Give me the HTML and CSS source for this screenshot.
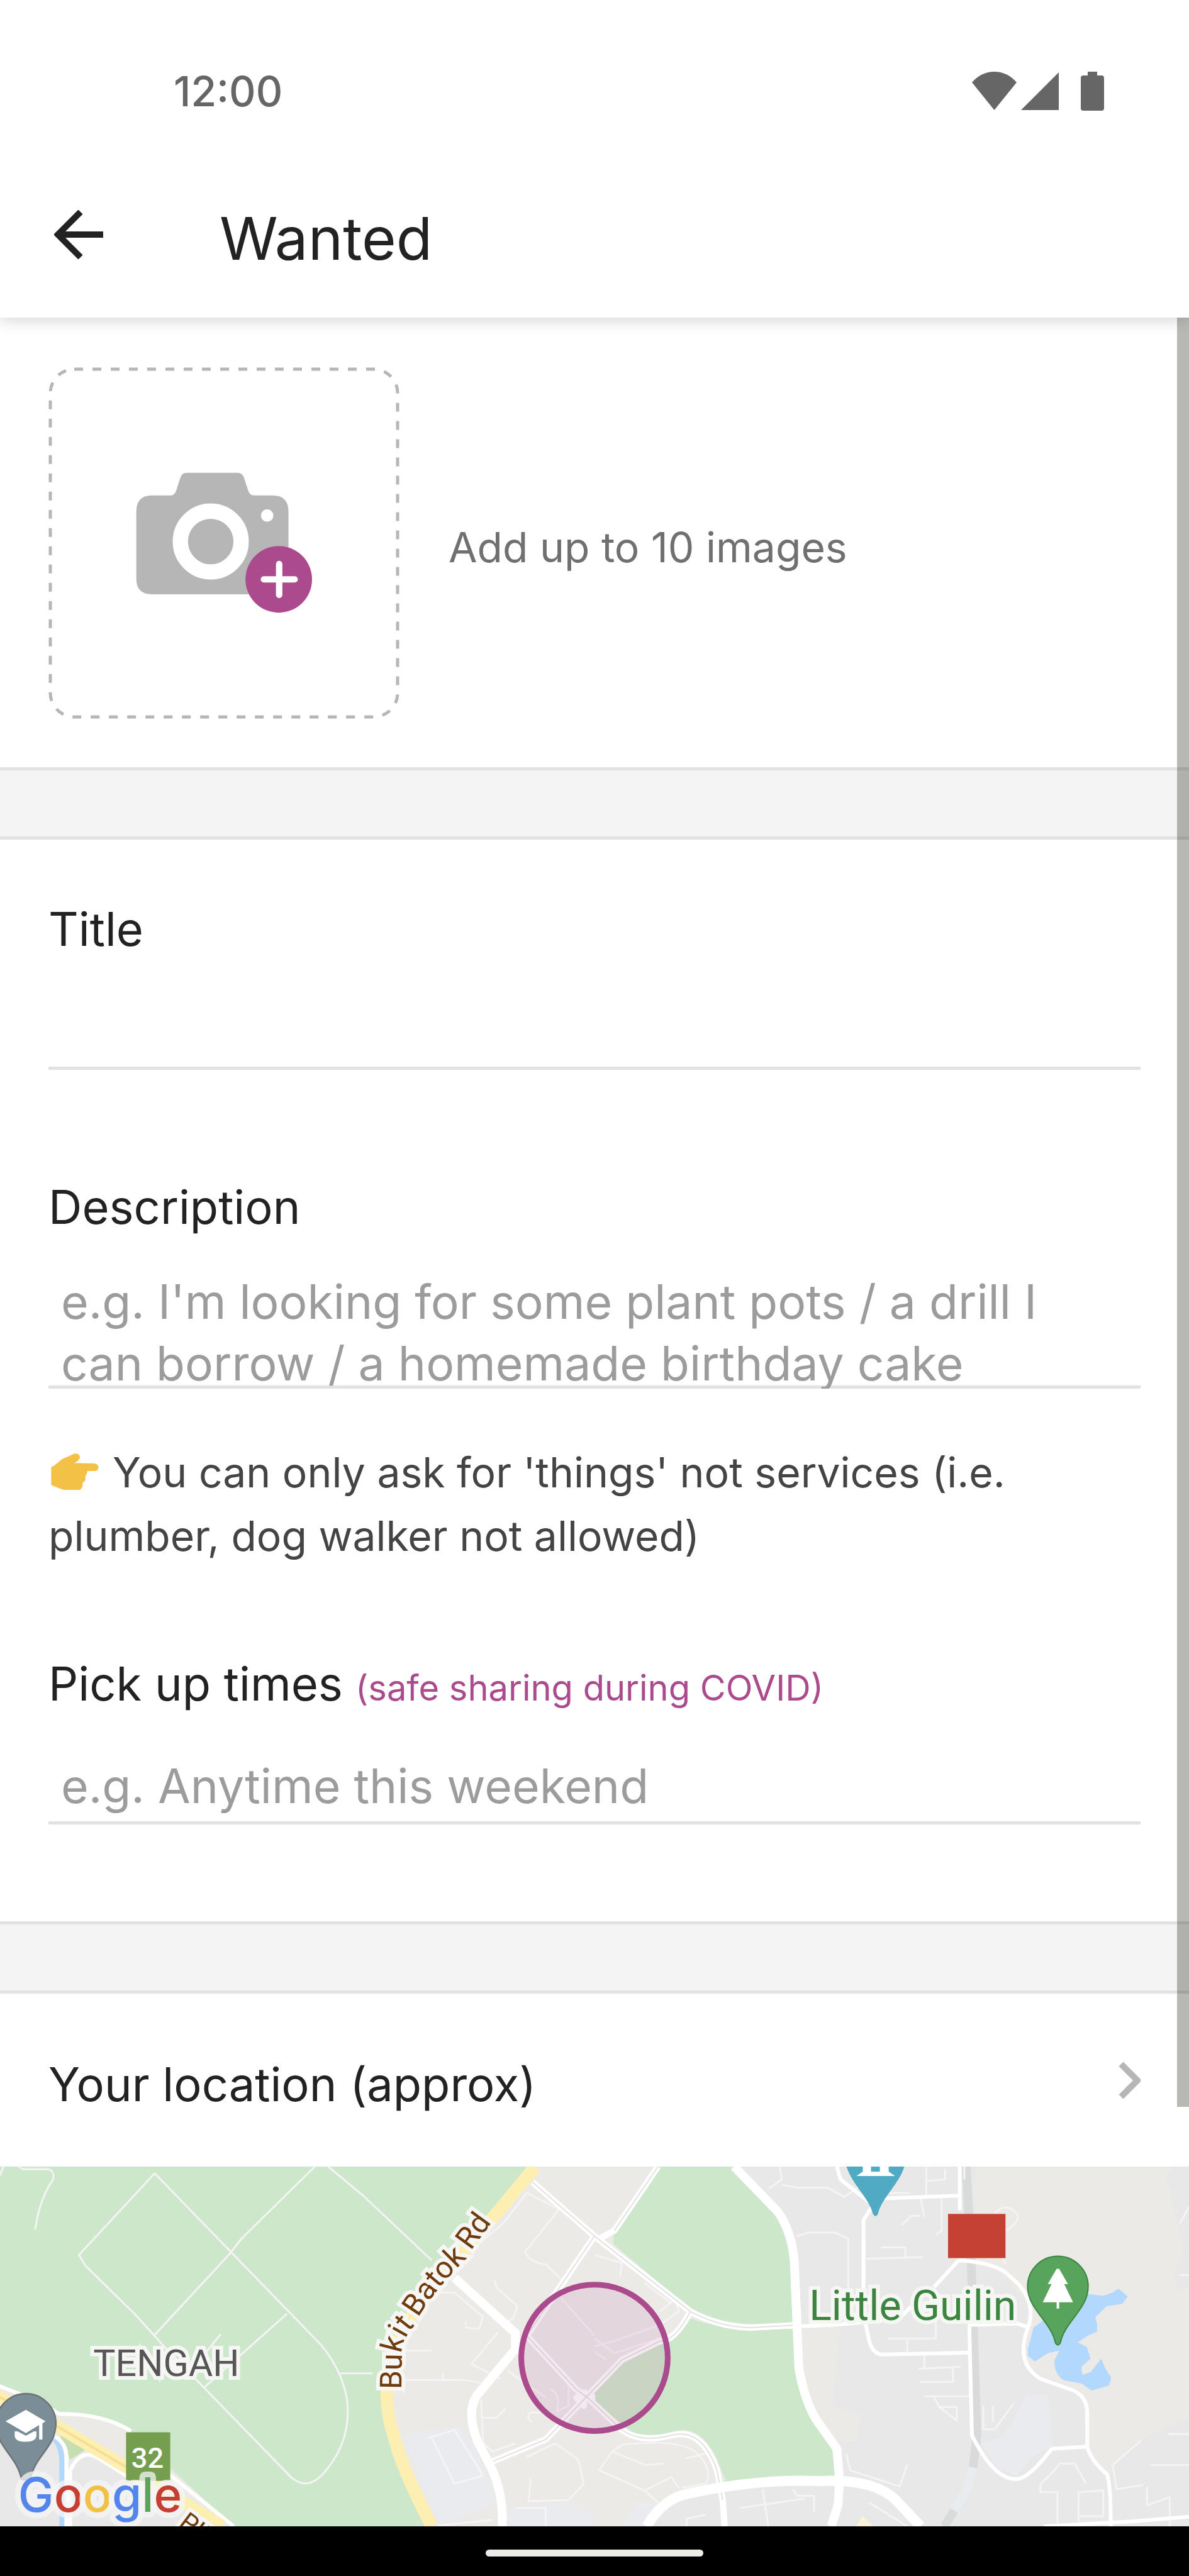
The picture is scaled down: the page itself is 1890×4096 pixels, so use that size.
FILE: index.html
```html
<!DOCTYPE html>
<html lang="en">
<head>
<meta charset="utf-8">
<meta name="viewport" content="width=device-width, initial-scale=1">
<title>Wanted</title>
<link rel="stylesheet" href="styles.css">
</head>
<body>
<div class="app">
  <div class="topbar">
    <div class="status">
      <span class="clock">12:00</span>
      <svg class="status-icons" viewBox="0 0 210 62" aria-hidden="true">
        <path d="M0 17Q15 0 35.500 0T71 17L35.500 61Z"/>
        <path d="M78 61L138 1V61Z"/>
        <path d="M184 0h15v6h7q4 0 4 4v48q0 4-4 4h-29q-4 0-4-4V10q0-4 4-4h7Z"/>
      </svg>
    </div>
    <header class="toolbar">
      <button class="back" type="button" aria-label="Back">
        <svg viewBox="0 0 78 78" aria-hidden="true"><path d="M78 39H8M42 3L6 39L42 75"/></svg>
      </button>
      <h1>Wanted</h1>
    </header>
  </div>

  <main class="content">
    <div class="scrollbar"></div>

    <section class="photos">
      <button class="add-photo" type="button" aria-label="Add images">
        <svg class="dashes" aria-hidden="true"><rect class="dash-box" rx="38"/></svg>
        <svg class="camera" viewBox="120 130 852 684" aria-hidden="true">
          <path fill="#b6b6b6" d="M122 320q0-78 76-78h88q22 0 29-24l20-62q8-24 30-24h246q24 0 32 24l20 62q7 24 31 24h88q76 0 76 78v324q0 76-76 76H198q-76 0-76-76Z"/>
          <circle cx="482" cy="465" r="147" fill="#b6b6b6" stroke="#fff" stroke-width="74"/>
          <circle cx="755" cy="339" r="30" fill="#fff"/>
          <circle cx="811" cy="648" r="161" fill="#ab4a8d"/>
          <path d="M813 574v149M739 648h149" stroke="#fff" stroke-width="31" stroke-linecap="round"/>
        </svg>
      </button>
      <p>Add up to 10 images</p>
    </section>

    <div class="band"></div>

    <form class="details">
      <div class="field">
        <label for="title">Title</label>
        <input id="title" type="text">
      </div>
      <div class="field">
        <label for="description">Description</label>
        <textarea id="description" rows="2" placeholder="e.g. I'm looking for some plant pots / a drill I&#10;can borrow / a homemade birthday cake"></textarea>
        <p class="hint"><svg class="hand" viewBox="70 120 231 178" aria-hidden="true"><path fill="#f2c146" d="M70 187L84 180L124 148L184 121Q204 118 211 136Q210 148 199 157L184 167L280 169Q300 172 301 187Q298 206 285 206H246L244 220Q240 224 237 230V251Q229 258 223 264V278Q219 296 208 298H133L109 290L70 274Z"/></svg>You can only ask for 'things' not services (i.e.<br>plumber, dog walker not allowed)</p>
      </div>
      <div class="field">
        <div class="label-row">
          <label for="pickup">Pick up times</label>
          <a href="#covid">(safe sharing during COVID)</a>
        </div>
        <input id="pickup" type="text" placeholder="e.g. Anytime this weekend">
      </div>
    </form>

    <div class="band"></div>

    <button class="location" type="button">
      <span>Your location (approx)</span>
      <svg class="chevron" viewBox="0 0 36 60" aria-hidden="true"><path d="M5 4L31 30L5 56"/></svg>
    </button>

    <svg class="map" viewBox="0 0 1890 570" preserveAspectRatio="xMidYMid slice" role="img" aria-label="Map of your approximate location">
      <svg class="ground" width="1890" height="570" viewBox="0 52 3136 1336" preserveAspectRatio="none">
        <rect y="52" width="3136" height="1336" fill="#ebeae7"/>
        <!-- parks -->
        <path class="park" d="M0 52H1395L1280 240L1180 390Q1080 570 1040 710Q1000 900 1040 1050Q1070 1170 1100 1260L1135 1388H620L420 1130Q340 1000 240 985Q160 980 110 920L0 860Z"/>
        <path class="park" d="M1738 52H1928L2048 240Q2083 290 2090 400L2103 630Q1930 660 1818 580L1618 340V300L1678 180Z"/>
        <path class="park" d="M1813 610Q1880 660 2093 655L2103 850L2138 960L2193 1100L2203 1200L2068 1205L1918 1235L1893 1150Q1858 1030 1798 1030Q1718 1065 1668 1040L1568 925V880L1638 780L1748 710Z"/>
        <!-- built-up areas -->
        <path class="town" d="M1948 52H2568V400L2618 430L2708 560L2698 780L2848 900L2863 1100L2920 1210L2940 1140L3000 1070L3136 980V1388H1698L1788 1280L2208 1210L2218 1080L2258 1070L2268 975L2193 940L2213 640H2118L2098 400L2078 280Z"/>
        <path class="town" d="M3070 90L3088 52H3136V510H3100L3090 450L3118 370Z"/>
        <path class="town" d="M0 950L150 1050L190 1110L330 1180L560 1388H0Z"/>
        <path fill="#e9ebee" d="M2703 900H2761L2773 1090L2718 1130L2678 1200L2628 1170L2583 1080L2633 1060L2668 1000ZM1065 1050L1210 1015L1250 1080L1310 1300L1160 1385L1120 1240ZM1330 1320L1500 1300L1568 1350V1388H1330ZM1680 1300H1740L1690 1388H1640Z"/>
        <path fill="#c5dfb0" d="M160 1040L240 1095L190 1140Z"/>
        <path fill="#fbf3d2" d="M2273 1350L2300 1388H2255Z"/>
        <!-- water -->
        <path class="water" d="M2865 525L2905 532L2930 520L2945 505L2970 535L2955 562L2915 570L2885 610V620L2889 635V665L2865 680L2838 705L2862 722L2872 765L2848 795L2850 825L2872 815L2900 765L2910 800L2926 835L2920 865L2875 884L2848 858L2800 845Q2775 820 2777 770L2790 735L2760 745L2725 776L2707 755V730L2722 650L2750 620Z"/>
        <path class="stream" d="M140 1055Q168 1080 168 1150V1388"/>
        <!-- railway -->
        <path class="rail" d="M2545 52L2558 400L2573 1050L2563 1170"/>
        <path class="rail pale" d="M2563 1170L2550 1240L2513 1330"/>
        <path class="rail" d="M2513 1330L2488 1388"/>
        <!-- lanes and footpaths -->
        <path class="lane" d="M55 52L65 62H130Q150 65 145 100Q110 170 98 285M0 100L15 52M412 77L213 380L230 420L360 600L440 725L770 1205Q810 1255 850 1200Q930 1080 918 920Q905 810 850 715L412 77M410 680L610 375L640 320L833 52M868 52L960 160L1140 400M760 598L540 875M585 675L520 790M900 820L985 820"/>
        <path class="lane" d="M1050 735H1140M1070 845H1230L1270 855M1170 818V850M1160 520H1200L1275 610L1265 655L1230 650V625M1315 665L1245 785L1320 840M1305 475L1310 500L1365 570L1355 615L1320 640M1390 150L1475 210L1385 370Q1400 410 1440 415L1480 470M1390 150L1330 260L1180 440M1130 1060L1200 1030L1240 1120L1275 1200L1200 1230L1140 1060M1270 920L1275 1080L1300 1110L1360 1080M1405 1000Q1385 985 1400 965H1425M1335 950L1310 985H1270M1390 1130L1465 1080L1525 1140L1540 1230L1500 1290L1395 1295L1400 1210M1360 1320H1440V1388M1155 1385L1300 1365"/>
        <path class="lane" d="M2025 135L2060 100L2055 52M2060 120L2100 130H2180L2225 165L2270 120M2395 150H2330V170M2440 52V165M2490 60V100L2440 105M2100 310L2130 297H2200L2235 320V510M2280 395L2430 388M2320 352H2385V395M2425 170L2435 240M2375 270L2400 235H2425M2480 165V290L2465 305M2340 690H2465V610M2390 690V745M2435 745V800M2420 803L2530 795M2425 852H2510V800M2435 905H2560M2460 910L2475 945L2520 995V945H2475M2590 940V1028H2620L2668 935M2615 940V1000M2620 225Q2650 180 2680 230Q2685 260 2650 290M2640 390L2650 415M2540 52V100M3105 455H3136M3105 265L3136 190M3075 1045H3136M3030 1160H3136M3004 1070L2930 1160L2940 1250L3010 1235M3020 1240V1310L3080 1280V1388"/>
        <path class="lane" d="M2230 1120L2240 1180L2370 1240L2390 1160M1950 1320L2120 1285M2010 1250L2025 1388M2090 1250L2100 1275H2145V1335M2290 1300L2390 1388M1810 1388V1360L1860 1345M1808 1135L1870 1115M1615 1110L1640 1085Q1800 1060 1840 1120Q1880 1180 1860 1230L1800 1245M1615 1110L1580 1180L1700 1255L1735 1300M1615 1110L1700 1160L1750 1155M1700 1255L1770 1205L1790 1245M2740 1230V1260L2785 1262V1388M2740 1230Q2780 1180 2790 1155H2830L2860 1230M2840 1388V1262L2905 1255V1350H2840"/>
        <path class="lane" d="M1568 380L1640 410L1635 460M1700 485L1770 560M1740 590L1780 545L1790 590L1740 640L1620 700L1568 720M1568 690L1620 745L1740 690M1480 540L1568 680M1600 770L1568 740M1450 880Q1480 890 1470 960L1500 940V870M1340 810L1440 910"/>
        <!-- secondary roads -->
        <path class="road thin" d="M2205 52L2215 100L2300 195L2275 250V600L2290 700Q2300 750 2325 750L2555 743M2330 170L2525 160M2528 52V215M2525 400L2460 500M2525 400Q2630 410 2660 460Q2730 540 2710 640Q2670 780 2740 840L2820 880Q2860 900 2863 960V1090Q2870 1140 2915 1195Q2925 1230 2925 1388M2550 640L2680 635L2710 650M2553 640L2560 1050Q2620 1220 2680 1212Q2710 1210 2770 1100L2863 1092M2750 1388L2980 1370L3136 1352"/>
        <path class="road double" d="M1405 110L1568 310L1820 590Q1900 650 1980 650L2110 640M1568 310L1390 680L1520 880L1550 910L1640 1030Q1690 1080 1770 1050Q1850 1020 1890 1180L1905 1290L1910 1388M1820 590Q1780 700 1740 700L1640 770L1440 1065L1295 1150M1735 52L1620 290L1580 320M1540 880V940L1520 910H1570"/>
        <path class="core" d="M1405 110L1568 310L1820 590Q1900 650 1980 650L2110 640M1568 310L1390 680L1520 880L1550 910L1640 1030Q1690 1080 1770 1050Q1850 1020 1890 1180L1905 1290M1820 590Q1780 700 1740 700L1640 770L1440 1065L1295 1150M1735 52L1620 290"/>
        <!-- main roads -->
        <path class="road main" d="M1935 52L2050 220Q2085 290 2093 400L2105 800Q2120 920 2150 990L2205 1100L2212 1220L2208 1310L2190 1388M1200 465L1360 670V730L1260 900Q1230 960 1260 1070L1300 1180Q1330 1280 1325 1388"/>
        <path class="road wide" d="M1705 1388Q1750 1280 1820 1265Q2000 1210 2160 1220Q2300 1210 2360 1290L2425 1388"/>
        <path class="road thin" d="M2110 645Q2240 640 2370 615L2450 500M0 865L110 925L160 970Q280 970 350 1035M190 1388V1180Q220 1090 270 1140L460 1310M150 1055Q180 1080 180 1130V1388M450 1195L620 1388"/>
        <!-- highways -->
        <path class="highway" d="M1412 52L1290 260L1200 400Q1070 600 1030 780Q1010 930 1040 1050Q1060 1170 1140 1388"/>
        <path class="highway" d="M0 905L160 1020L340 1170L590 1388"/>
        <path class="highway-core" d="M0 905L160 1020L340 1170"/>
      </svg>

      <circle class="area" cx="945" cy="303" r="116"/>

      <path id="bukit" fill="none" d="M639 353L640 290Q643 272 657 255L669 234Q696 192 735 153L784 86"/>
      <text class="place road-name"><textPath href="#bukit">Bukit Batok Rd</textPath></text>
      <text class="place town-name" x="151" y="332">TENGAH</text>
      <text class="place park-name" x="1285" y="243">Little Guilin</text>

      <!-- museum pin -->
      <path fill="#50aac3" d="M1342-15a48 48 0 0 1 96 0C1438 20 1401 45 1394 75Q1390 82 1386 75C1379 45 1342 20 1342-15Z"/>
      <path fill="#fff" d="M1360 15L1370 8V0H1383V8H1397V0H1411V8L1421 15Z"/>
      <rect x="1505" y="75" width="91" height="70" fill="#c54133"/>
      <!-- park pin -->
      <path fill="#58a45c" stroke="#3c8540" stroke-width="2" d="M1631 190a48 48 0 0 1 96 0C1727 226 1690 245 1683 279Q1679 286 1675 279C1668 245 1631 226 1631 190Z"/>
      <path fill="#fff" d="M1677 162h4L1695 186H1689L1703 215H1681V225H1677V215H1655L1669 186H1663Z"/>

      <!-- school pin -->
      <g transform="translate(0 273) scale(.328)">
        <path fill="#7b8d96" stroke="#6f7679" stroke-width="8" d="M-10 410a145 145 0 0 1 290 0C275 530 180 560 155 680H115C90 560-5 530-10 410Z"/>
        <path fill="#fff" d="M37 398L135 343L230 398L215 408V486H199V416L135 455ZM81 447H95L135 468L174 447H186V470Q180 497 133 497T81 470Z"/>
      </g>

      <rect x="203" y="421" width="70" height="77" fill="#759f4f"/>
      <text class="exit" x="237" y="477">32</text>
      <text class="place pie" transform="translate(285 568) rotate(37)">PIE</text>
      <text class="google" x="32" y="547"><tspan fill="#5385ec">G</tspan><tspan fill="#c73f33">o</tspan><tspan fill="#f2c042">o</tspan><tspan fill="#5385ec">g</tspan><tspan fill="#58a45c">l</tspan><tspan fill="#c73f33">e</tspan></text>
    </svg>
  </main>

  <div class="navbar"><div class="pill"></div></div>
</div>
</body>
</html>
```
FILE: styles.css
```css
* {
  box-sizing: border-box;
}

body {
  margin: 0;
  background: #fff;
  color: #222;
  font-family: Inter, "Liberation Sans", sans-serif;
}

button,
input,
textarea {
  margin: 0;
  padding: 0;
  border: 0;
  background: none;
  color: inherit;
  font: inherit;
}

h1,
p {
  margin: 0;
  font-weight: 400;
}

svg {
  display: block;
}

.app {
  display: flex;
  flex-direction: column;
  min-height: 100vh;
}

/* Status bar and toolbar */
.topbar {
  position: relative;
  z-index: 1;
  background: #fff;
  box-shadow: 0 5px 22px rgba(0, 0, 0, 0.16);
}

.status {
  display: flex;
  align-items: center;
  justify-content: space-between;
  height: 228px;
  padding: 62px 135px 0 276px;
  color: #666;
}

.clock {
  font-size: 66px;
  font-weight: 500;
  line-height: 80px;
}

.status-icons {
  width: 210px;
  height: 62px;
  fill: #666;
}

.toolbar {
  display: flex;
  align-items: center;
  gap: 185px;
  height: 277px;
  padding: 13px 77px 0 86px;
}

.back svg {
  width: 78px;
  height: 78px;
  fill: none;
  stroke: #222;
  stroke-width: 10px;
}

.toolbar h1 {
  padding-top: 12px;
  font-size: 94px;
  line-height: 112px;
}

/* Scrolling content */
.content {
  position: relative;
  flex: 1;
  display: flex;
  flex-direction: column;
}

.scrollbar {
  position: absolute;
  z-index: 1;
  top: 0;
  right: 0;
  width: 19px;
  height: 81%;
  background: rgba(20, 20, 10, 0.3);
}

.photos {
  display: flex;
  align-items: center;
  gap: 78px;
  padding: 79px 77px 77px;
}

.photos p {
  padding-top: 12px;
  color: #707070;
  font-size: 66px;
  line-height: 80px;
}

.add-photo {
  position: relative;
  display: flex;
  align-items: center;
  justify-content: center;
  width: 558px;
  height: 559px;
}

.dashes {
  position: absolute;
  inset: 0;
  width: 100%;
  height: 100%;
}

.dash-box {
  x: 3px;
  y: 3px;
  width: calc(100% - 6px);
  height: calc(100% - 6px);
  fill: none;
  stroke: #b6b6b6;
  stroke-width: 5px;
  stroke-dasharray: 14 15;
}

.camera {
  width: 280px;
}

.band {
  height: 115px;
  border: solid #e2e2e2;
  border-width: 5px 0;
  background: #f4f4f4;
}

/* Form */
.details {
  display: flex;
  flex-direction: column;
  padding: 97px 77px 154px;
  font-size: 74px;
  line-height: 90px;
}

.field {
  display: flex;
  flex-direction: column;
}

.field:nth-child(1) {
  margin-bottom: 173px;
}

.field:nth-child(2) {
  margin-bottom: 139px;
}

.field input,
.field textarea {
  width: 100%;
  outline: 0;
  box-shadow: inset 0 -5px #e2e2e2;
  font-size: 75px;
}

.field input {
  height: 179px;
  padding: 55px 20px 0;
}

.field textarea {
  height: 187px;
  margin-top: 57px;
  padding: 0 20px;
  line-height: 98px;
  resize: none;
  overflow: hidden;
}

::placeholder {
  color: #9c9c9c;
  opacity: 1;
}

.hint {
  margin-top: 83px;
  color: #444;
  font-size: 66px;
  line-height: 101px;
}

.hand {
  display: inline-block;
  width: 76px;
  height: 58px;
  margin: 0 22px 0 4px;
  vertical-align: -4px;
}

.label-row {
  display: flex;
  align-items: baseline;
  gap: 20px;
}

.label-row a {
  color: #ab4a8d;
  font-size: 56px;
  line-height: 66px;
  text-decoration: none;
}

.location {
  display: flex;
  align-items: center;
  justify-content: space-between;
  height: 275px;
  padding: 0 77px;
  font-size: 74px;
  line-height: 90px;
  text-align: left;
}

.location span {
  padding-top: 12px;
}

.chevron {
  width: 36px;
  height: 60px;
  fill: none;
  stroke: #b6b6b6;
  stroke-width: 10px;
}

/* Map */
.map {
  flex: 1;
  width: 100%;
  min-height: 0;
}

.ground path {
  vector-effect: non-scaling-stroke;
}

.park {
  fill: #cde7cb;
}

.town {
  fill: #e8e8e8;
}

.water {
  fill: #b3d8fd;
}

.stream,
.rail,
.lane,
.road,
.core,
.highway,
.highway-core {
  fill: none;
  stroke-linejoin: round;
}

.stream {
  stroke: #b3d8fd;
  stroke-width: 8px;
}

.rail {
  stroke: #d8dbda;
  stroke-width: 14px;
}

.rail.pale {
  stroke: #e9ecee;
}

.lane {
  stroke: #f6f3f6;
  stroke-width: 3px;
}

.road {
  stroke: #fff;
}

.road.thin {
  stroke-width: 6px;
}

.road.double {
  stroke-width: 10px;
}

.core {
  stroke: #e2e2e2;
  stroke-width: 2px;
}

.road.main {
  stroke-width: 14px;
}

.road.wide {
  stroke-width: 16px;
}

.highway {
  stroke: #fdeeb2;
  stroke-width: 20px;
}

.highway-core {
  stroke: #f5df92;
  stroke-width: 4px;
}

.area {
  fill: rgba(171, 74, 141, 0.12);
  stroke: #ab4a8d;
  stroke-width: 9px;
}

.place {
  font-family: Roboto, "Liberation Sans", sans-serif;
  paint-order: stroke;
  stroke: #f6f6f4;
  stroke-width: 12px;
}

.road-name {
  fill: #6f3a0c;
  font-size: 48px;
}

.town-name {
  fill: #565656;
  font-size: 59px;
}

.park-name {
  fill: #3c8540;
  font-size: 66px;
}

.pie {
  fill: #6f3a0c;
  font-size: 40px;
}

.exit {
  fill: #fff;
  font-family: Roboto, "Liberation Sans", sans-serif;
  font-size: 45px;
  font-weight: 500;
  text-anchor: middle;
}

.google {
  font-size: 76px;
  font-weight: 500;
  paint-order: stroke;
  stroke: rgba(246, 246, 246, 0.75);
  stroke-width: 18px;
  stroke-linejoin: round;
}

/* System navigation */
.navbar {
  display: flex;
  align-items: center;
  justify-content: center;
  height: 79px;
  padding-top: 6px;
  background: #000;
}

.pill {
  width: 346px;
  height: 11px;
  border-radius: 6px;
  background: #edebe8;
}
```
